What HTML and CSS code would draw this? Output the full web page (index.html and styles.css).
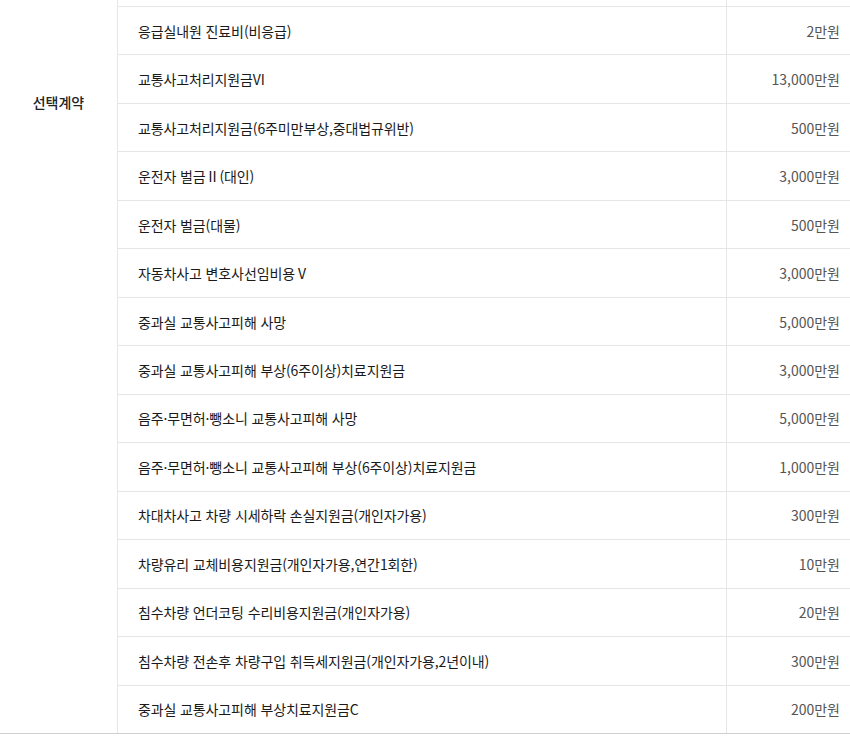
FILE: index.html
```html
<!DOCTYPE html>
<html lang="ko">
<head>
<meta charset="utf-8">
<link rel="stylesheet" href="styles.css">
</head>
<body>
<div class="table">
  <div class="side"><span class="side-label">선택계약</span></div>
  <div class="rows">
    <div class="row row-cut"><div class="name"></div><div class="amt"></div></div>
    <div class="row"><div class="name">응급실내원 진료비(비응급)</div><div class="amt">2만원</div></div>
    <div class="row"><div class="name">교통사고처리지원금VI</div><div class="amt">13,000만원</div></div>
    <div class="row"><div class="name">교통사고처리지원금(6주미만부상,중대법규위반)</div><div class="amt">500만원</div></div>
    <div class="row"><div class="name">운전자 벌금Ⅱ(대인)</div><div class="amt">3,000만원</div></div>
    <div class="row"><div class="name">운전자 벌금(대물)</div><div class="amt">500만원</div></div>
    <div class="row"><div class="name">자동차사고 변호사선임비용Ⅴ</div><div class="amt">3,000만원</div></div>
    <div class="row"><div class="name">중과실 교통사고피해 사망</div><div class="amt">5,000만원</div></div>
    <div class="row"><div class="name">중과실 교통사고피해 부상(6주이상)치료지원금</div><div class="amt">3,000만원</div></div>
    <div class="row"><div class="name">음주·무면허·뺑소니 교통사고피해 사망</div><div class="amt">5,000만원</div></div>
    <div class="row"><div class="name">음주·무면허·뺑소니 교통사고피해 부상(6주이상)치료지원금</div><div class="amt">1,000만원</div></div>
    <div class="row"><div class="name">차대차사고 차량 시세하락 손실지원금(개인자가용)</div><div class="amt">300만원</div></div>
    <div class="row"><div class="name">차량유리 교체비용지원금(개인자가용,연간1회한)</div><div class="amt">10만원</div></div>
    <div class="row"><div class="name">침수차량 언더코팅 수리비용지원금(개인자가용)</div><div class="amt">20만원</div></div>
    <div class="row"><div class="name">침수차량 전손후 차량구입 취득세지원금(개인자가용,2년이내)</div><div class="amt">300만원</div></div>
    <div class="row"><div class="name">중과실 교통사고피해 부상치료지원금C</div><div class="amt">200만원</div></div>
  </div>
</div>
</body>
</html>
```

FILE: styles.css
```css
html, body {
  margin: 0;
  padding: 0;
  background: #fff;
}
body {
  font-family: "Noto Sans CJK KR", "Noto Sans", sans-serif;
  font-size: 14px;
  color: #222;
  width: 850px;
  overflow: hidden;
}
.table {
  display: flex;
  width: 850px;
  border-bottom: 1px solid #cfcfcf;
}
.side {
  width: 118px;
  flex: none;
  border-right: 1px solid #e6e6e6;
  text-align: center;
  padding-top: 92px;
  box-sizing: border-box;
}
.side-label {
  font-weight: 500;
  font-size: 14px;
  line-height: 20px;
  color: #222;
}
.rows {
  flex: 1;
  display: flex;
  flex-direction: column;
}
.row {
  display: flex;
  height: 48.47px;
  box-sizing: border-box;
  border-bottom: 1px solid #e6e6e6;
  align-items: center;
}
.row:last-child {
  border-bottom: none;
  height: 47.47px;
}
.row-cut {
  height: 7px;
  align-items: stretch;
}
.name {
  flex: 1;
  padding-left: 20px;
  line-height: 20px;
  letter-spacing: -0.12px;
  color: #1a1a1a;
  align-self: stretch;
  display: flex;
  align-items: center;
}
.amt {
  width: 124px;
  flex: none;
  box-sizing: border-box;
  border-left: 1px solid #e6e6e6;
  text-align: right;
  padding-right: 10px;
  color: #555;
  align-self: stretch;
  display: flex;
  align-items: center;
  justify-content: flex-end;
}
```
